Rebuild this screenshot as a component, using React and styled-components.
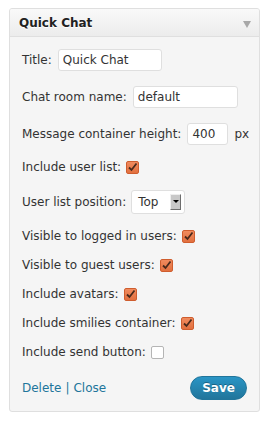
import React from "react";
import styled, { createGlobalStyle } from "styled-components";

const Global = createGlobalStyle`
  html, body { margin: 0; padding: 0; background: #fff; }
  body { font-family: "DejaVu Sans", "Liberation Sans", sans-serif; font-size: 12px; color: #333; }
`;

const Widget = styled.div`
  margin: 8px 0 0 9px;
  width: 251px;
  box-sizing: border-box;
  border: 1px solid #dfdfdf;
  border-radius: 3px;
  background: #f5f5f5;
  overflow: hidden;
`;

const Header = styled.div`
  height: 27px;
  display: flex;
  align-items: center;
  justify-content: space-between;
  padding: 0 8px 0 9px;
  background: linear-gradient(to bottom, #f9f9f9, #ececec);
  border-bottom: 1px solid #dfdfdf;
`;

const HeaderTitle = styled.h3`
  margin: 0;
  font-size: 12px;
  font-weight: bold;
  color: #222;
  text-shadow: 0 1px 0 #fff;
`;

const Arrow = styled.span`
  width: 0;
  height: 0;
  border-left: 4px solid transparent;
  border-right: 4px solid transparent;
  border-top: 7px solid #a8a8a8;
  margin-top: 3px;
`;

const Body = styled.div`
  display: flex;
  flex-direction: column;
  gap: 13px;
  padding: 11px 12px 11px 12px;
`;

const Row = styled.div`
  display: flex;
  align-items: center;
  min-height: ${(p) => p.$h || 16}px;
  white-space: nowrap;
`;

const Label = styled.span`
  margin-right: ${(p) => p.$gap ?? 6}px;
`;

const TextInput = styled.input`
  box-sizing: border-box;
  width: ${(p) => p.$w}px;
  height: 22px;
  margin: 1px 0;
  padding: 0 4px;
  border: 1px solid #dfdfdf;
  border-radius: 3px;
  background: #fff;
  font-family: inherit;
  font-size: 12px;
  color: #333;
  outline: none;
`;

const Unit = styled.span`
  margin-left: 6px;
`;

const Box = styled.span`
  box-sizing: border-box;
  width: 13px;
  height: 13px;
  border-radius: 2px;
  display: inline-flex;
  align-items: center;
  justify-content: center;
  border: 1px solid ${(p) => (p.$on ? "#cf5d2e" : "#b5b5b5")};
  background: ${(p) => (p.$on ? "linear-gradient(#f08b5e, #e2703f)" : "#fff")};
`;

const Check = ({ on }) => (
  <Box $on={on}>
    {on && (
      <svg width="11" height="11" viewBox="0 0 11 11">
        <path d="M2 5.5 L4.5 8 L9.5 1.5" fill="none" stroke="#4a2a1c" strokeWidth="1.8" />
      </svg>
    )}
  </Box>
);

const Select = styled.div`
  box-sizing: border-box;
  width: 54px;
  height: 24px;
  display: flex;
  align-items: center;
  justify-content: space-between;
  padding: 0 3px 0 6px;
  border: 1px solid #dfdfdf;
  border-radius: 3px;
  background: #fff;
`;

const SelectBtn = styled.span`
  box-sizing: border-box;
  width: 11px;
  height: 16px;
  display: flex;
  align-items: center;
  justify-content: center;
  background: #c8c8c8;
  border-top: 1px solid #eee;
  border-left: 1px solid #eee;
  border-right: 1px solid #6e6e6e;
  border-bottom: 1px solid #6e6e6e;
  &::after {
    content: "";
    border-left: 3px solid transparent;
    border-right: 3px solid transparent;
    border-top: 3px solid #000;
  }
`;

const Footer = styled.div`
  display: flex;
  align-items: center;
  justify-content: space-between;
  margin-top: 3px;
`;

const Links = styled.div`
  color: #21759b;
  display: flex;
  gap: 4px;
`;

const Link = styled.a`
  color: #21759b;
  text-decoration: none;
  cursor: pointer;
`;

const SaveButton = styled.button`
  height: 24px;
  width: 57px;
  border-radius: 12px;
  border: 1px solid #21759b;
  background: linear-gradient(to bottom, #2a95c5, #21759b);
  color: #fff;
  font-family: inherit;
  font-size: 12px;
  font-weight: bold;
  text-shadow: 0 -1px 0 rgba(0, 0, 0, 0.3);
  padding: 0;
  cursor: pointer;
`;

export default function App() {
  return (
    <>
      <Global />
      <Widget>
        <Header>
          <HeaderTitle>Quick Chat</HeaderTitle>
          <Arrow />
        </Header>
        <Body>
          <Row $h={24}>
            <Label>Title:</Label>
            <TextInput $w={104} defaultValue="Quick Chat" />
          </Row>
          <Row $h={24}>
            <Label>Chat room name:</Label>
            <TextInput $w={105} defaultValue="default" />
          </Row>
          <Row $h={24}>
            <Label>Message container height:</Label>
            <TextInput $w={41} defaultValue="400" />
            <Unit>px</Unit>
          </Row>
          <Row>
            <Label $gap={5}>Include user list:</Label>
            <Check on />
          </Row>
          <Row $h={27}>
            <Label $gap={5}>User list position:</Label>
            <Select>
              <span>Top</span>
              <SelectBtn />
            </Select>
          </Row>
          <Row>
            <Label $gap={5}>Visible to logged in users:</Label>
            <Check on />
          </Row>
          <Row>
            <Label $gap={5}>Visible to guest users:</Label>
            <Check on />
          </Row>
          <Row>
            <Label $gap={5}>Include avatars:</Label>
            <Check on />
          </Row>
          <Row>
            <Label $gap={5}>Include smilies container:</Label>
            <Check on />
          </Row>
          <Row>
            <Label $gap={5}>Include send button:</Label>
            <Check />
          </Row>
          <Footer>
            <Links>
              <Link>Delete</Link>
              <span>|</span>
              <Link>Close</Link>
            </Links>
            <SaveButton>Save</SaveButton>
          </Footer>
        </Body>
      </Widget>
    </>
  );
}
